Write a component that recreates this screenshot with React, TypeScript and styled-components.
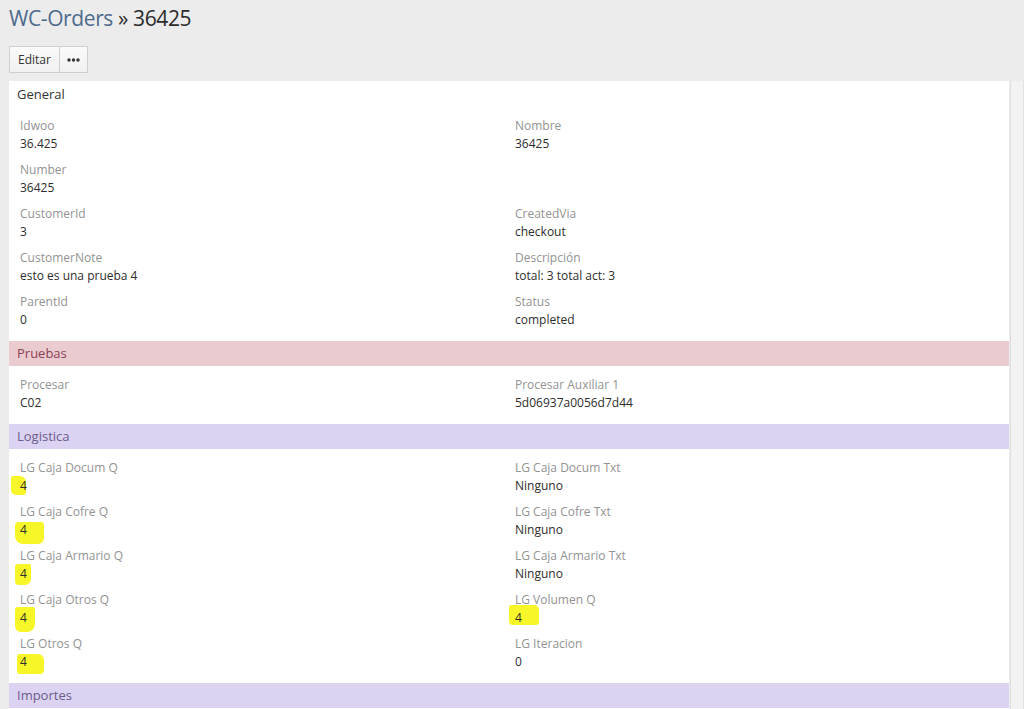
import React from "react";
import styled, { createGlobalStyle } from "styled-components";

const GlobalStyle = createGlobalStyle`
  html, body {
    margin: 0;
    padding: 0;
    overflow: hidden;
    background: #ececec;
    font-family: "Open Sans", "Noto Sans", Arial, sans-serif;
  }
`;

type Mark = { left: number; top: number; width: number; height: number; radius: string };

type Field = { label: string; value: string; mark?: Mark };

type Tone = "plain" | "red" | "violet";

type Section = {
  title: string;
  tone: Tone;
  rows: [Field | null, Field | null][];
};

const sections: Section[] = [
  {
    title: "General",
    tone: "plain",
    rows: [
      [
        { label: "Idwoo", value: "36.425" },
        { label: "Nombre", value: "36425" },
      ],
      [{ label: "Number", value: "36425" }, null],
      [
        { label: "CustomerId", value: "3" },
        { label: "CreatedVia", value: "checkout" },
      ],
      [
        { label: "CustomerNote", value: "esto es una prueba 4" },
        { label: "Descripción", value: "total: 3 total act: 3" },
      ],
      [
        { label: "ParentId", value: "0" },
        { label: "Status", value: "completed" },
      ],
    ],
  },
  {
    title: "Pruebas",
    tone: "red",
    rows: [
      [
        { label: "Procesar", value: "C02" },
        { label: "Procesar Auxiliar 1", value: "5d06937a0056d7d44" },
      ],
    ],
  },
  {
    title: "Logistica",
    tone: "violet",
    rows: [
      [
        {
          label: "LG Caja Docum Q",
          value: "4",
          mark: { left: -9, top: -1, width: 15, height: 19, radius: "2px 6px 3px 5px" },
        },
        { label: "LG Caja Docum Txt", value: "Ninguno" },
      ],
      [
        {
          label: "LG Caja Cofre Q",
          value: "4",
          mark: { left: -5, top: 1, width: 29, height: 22, radius: "4px 3px 6px 8px" },
        },
        { label: "LG Caja Cofre Txt", value: "Ninguno" },
      ],
      [
        {
          label: "LG Caja Armario Q",
          value: "4",
          mark: { left: -5, top: -1, width: 16, height: 21, radius: "3px 2px 6px 4px" },
        },
        { label: "LG Caja Armario Txt", value: "Ninguno" },
      ],
      [
        {
          label: "LG Caja Otros Q",
          value: "4",
          mark: { left: -5, top: -2, width: 20, height: 25, radius: "3px 2px 8px 6px" },
        },
        {
          label: "LG Volumen Q",
          value: "4",
          mark: { left: -6, top: -4, width: 30, height: 20, radius: "2px 5px 3px 4px" },
        },
      ],
      [
        {
          label: "LG Otros Q",
          value: "4",
          mark: { left: -3, top: 1, width: 27, height: 20, radius: "3px 6px 4px 3px" },
        },
        { label: "LG Iteracion", value: "0" },
      ],
    ],
  },
  {
    title: "Importes",
    tone: "violet",
    rows: [],
  },
];

const bands = {
  plain: { bg: "#ffffff", fg: "#333333", h: 26 },
  red: { bg: "#eacbd0", fg: "#8c4152", h: 25 },
  violet: { bg: "#dcd3f2", fg: "#6a5c8c", h: 25 },
};

export default function App() {
  return (
    <>
      <GlobalStyle />
      <Page>
        <Title>
          <Crumb>WC-Orders</Crumb> » 36425
        </Title>
        <Toolbar>
          <ToolButton>Editar</ToolButton>
          <ToolButton $narrow aria-label="Más">
            <svg width="13" height="4" viewBox="0 0 13 4">
              <circle cx="2" cy="2" r="1.7" fill="#333" />
              <circle cx="6.5" cy="2" r="1.7" fill="#333" />
              <circle cx="11" cy="2" r="1.7" fill="#333" />
            </svg>
          </ToolButton>
        </Toolbar>
        <Main>
          <Card>
            {sections.map((section) => (
              <div key={section.title}>
                <SectionHeader $tone={section.tone}>{section.title}</SectionHeader>
                {section.rows.length > 0 && (
                  <SectionBody>
                    {section.rows.map((row, i) => (
                      <Row key={i}>
                        {row.map((field, j) =>
                          field ? (
                            <FieldCell key={j}>
                              <Label>{field.label}</Label>
                              <Value>
                                {field.mark && (
                                  <Highlight
                                    style={{
                                      left: field.mark.left,
                                      top: field.mark.top,
                                      width: field.mark.width,
                                      height: field.mark.height,
                                      borderRadius: field.mark.radius,
                                    }}
                                  />
                                )}
                                <ValueText>{field.value}</ValueText>
                              </Value>
                            </FieldCell>
                          ) : (
                            <FieldCell key={j} />
                          )
                        )}
                      </Row>
                    ))}
                  </SectionBody>
                )}
              </div>
            ))}
          </Card>
          <SideStrip />
        </Main>
      </Page>
    </>
  );
}

const Page = styled.div`
  display: flex;
  flex-direction: column;
  padding-left: 9px;
`;

const Title = styled.h1`
  margin: 3px 0 0;
  font-size: 21px;
  line-height: 30px;
  font-weight: 400;
  color: #2b2b2b;
  letter-spacing: -0.4px;
`;

const Crumb = styled.span`
  color: #4e6b8c;
`;

const Toolbar = styled.div`
  display: flex;
  margin-top: 13px;
`;

const ToolButton = styled.button<{ $narrow?: boolean }>`
  display: flex;
  align-items: center;
  justify-content: center;
  height: 27px;
  width: ${(p) => (p.$narrow ? "29px" : "51px")};
  padding: 0;
  margin-left: ${(p) => (p.$narrow ? "-1px" : "0")};
  border: 1px solid #cfcfcf;
  background: linear-gradient(#fafafa, #f1f1f1);
  font-family: inherit;
  font-size: 12px;
  color: #333;
  cursor: pointer;
`;

const Main = styled.div`
  display: flex;
  margin-top: 8px;
`;

const Card = styled.div`
  width: 1000px;
  background: #ffffff;
`;

const SideStrip = styled.div`
  width: 12px;
  margin-left: 1px;
  height: 640px;
  background: #f2f2f2;
  border-left: 1px solid #dedede;
  border-right: 1px solid #e2e2e2;
`;

const SectionHeader = styled.div<{ $tone: Tone }>`
  height: ${(p) => bands[p.$tone].h}px;
  line-height: ${(p) => bands[p.$tone].h}px;
  padding: 0 8px;
  font-size: 13px;
  background: ${(p) => bands[p.$tone].bg};
  color: ${(p) => bands[p.$tone].fg};
`;

const SectionBody = styled.div`
  padding: 10px 11px 4px;
`;

const Row = styled.div`
  display: grid;
  grid-template-columns: 495px 1fr;
  margin-bottom: 8px;
`;

const FieldCell = styled.div`
  display: flex;
  flex-direction: column;
`;

const Label = styled.div`
  font-size: 12px;
  line-height: 18px;
  color: #939393;
`;

const Value = styled.div`
  position: relative;
  font-size: 12px;
  line-height: 18px;
  color: #2e2e2e;
`;

const ValueText = styled.span`
  position: relative;
`;

const Highlight = styled.span`
  position: absolute;
  background: #f6f51c;
  opacity: 0.95;
`;
